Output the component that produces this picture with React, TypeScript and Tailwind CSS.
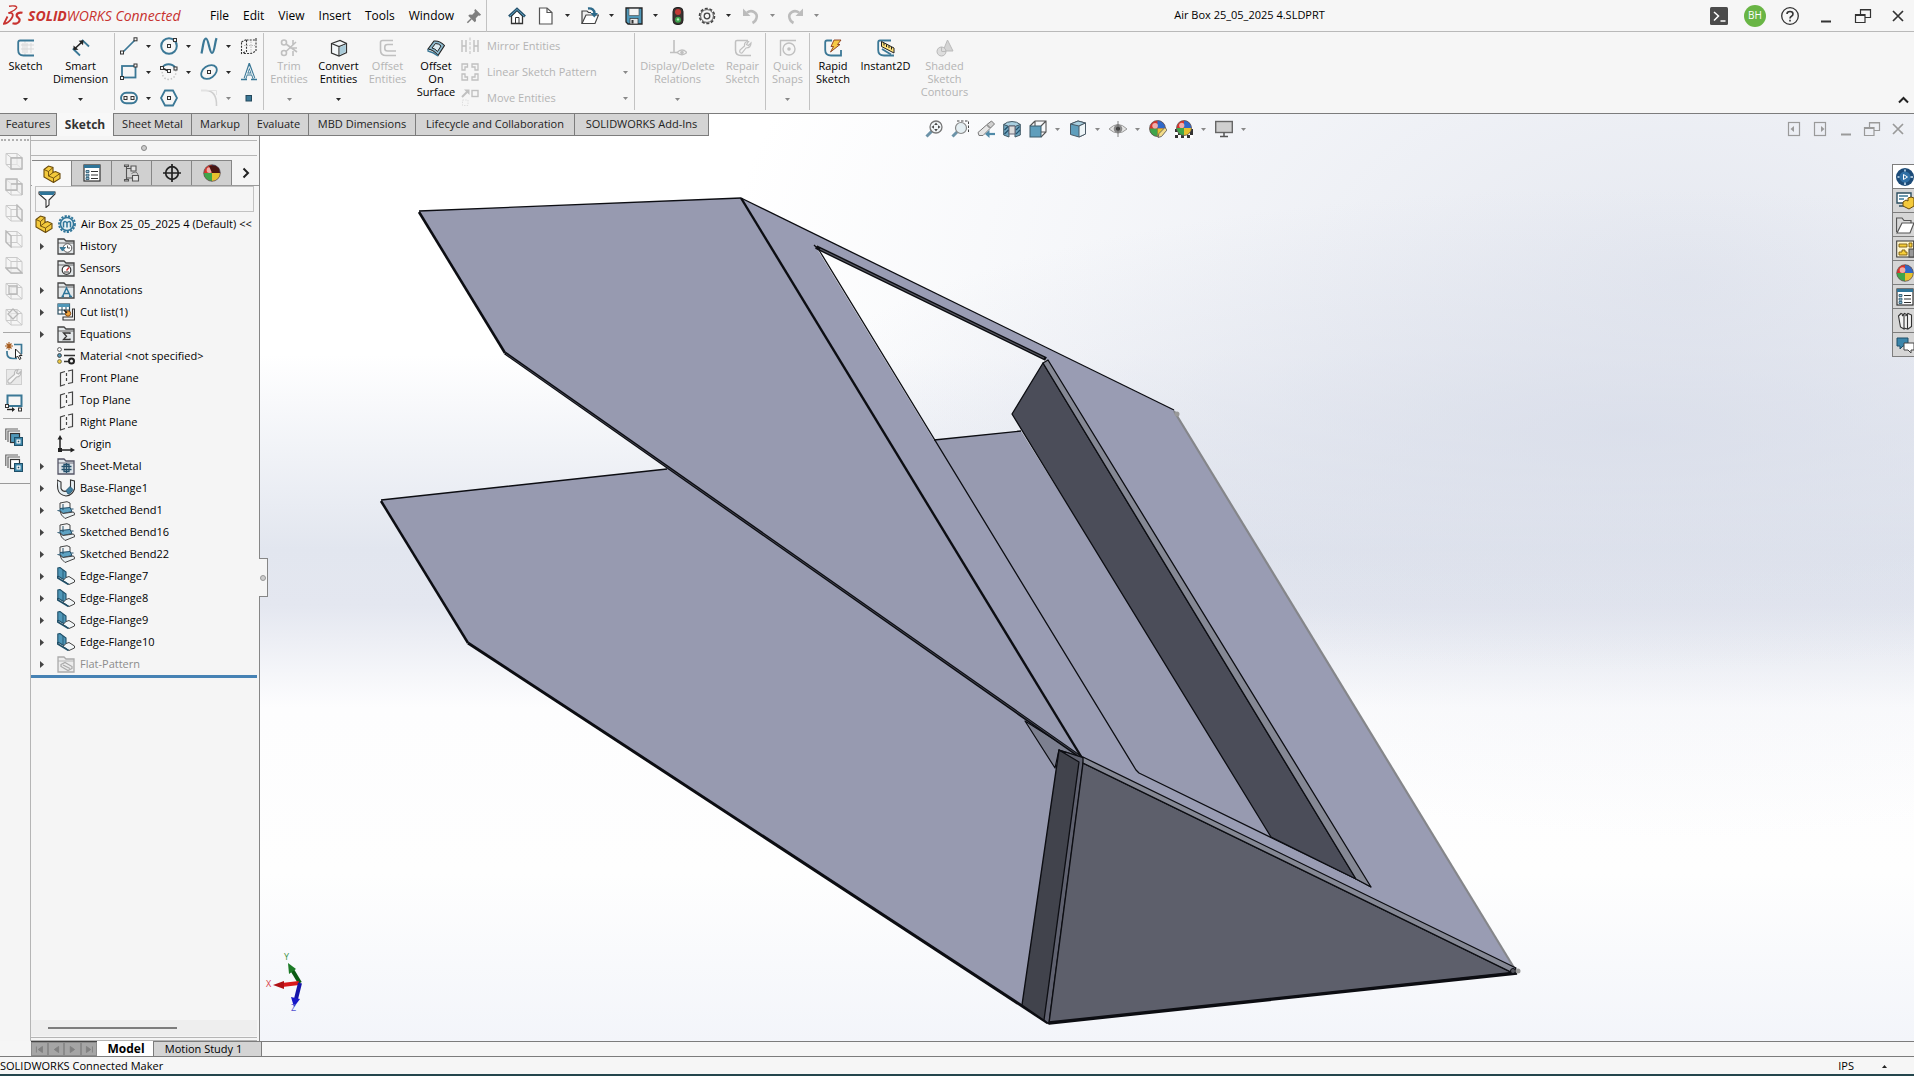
import type { ReactNode } from 'react';

const B = '#3b7896';
const D = '#333333';
const G = '#c0c0c0';

function Ico({ children, size = 18 }: { children: ReactNode; size?: number }) {
  return (
    <svg width={size} height={size} viewBox="0 0 18 18" fill="none" className="shrink-0" aria-hidden="true">
      {children}
    </svg>
  );
}

function Caret({ tone = 'dark' }: { tone?: 'dark' | 'gray' }) {
  return (
    <svg width="5" height="3" viewBox="0 0 5 3" className="shrink-0" aria-hidden="true">
      <path d="M0 0H5L2.5 3Z" fill={tone === 'gray' ? '#888888' : '#2a2a2a'} />
    </svg>
  );
}

const sq = (x: number, y: number, c = D) => (
  <rect x={x} y={y} width="3" height="3" fill="#f6f6f6" stroke={c} strokeWidth="1" />
);

/* ---------- title bar icons ---------- */
const Home = () => (
  <Ico>
    <path d="M3.5 9V16.5H14.5V9L9 3.5Z" fill="#fff" stroke={D} strokeWidth="1.3" />
    <path d="M1 9.5L9 2L17 9.5" stroke="#24506b" strokeWidth="2.6" />
    <path d="M1.6 9.3L9 2.4L16.4 9.3" stroke="#5d9dbb" strokeWidth="1" />
    <path d="M7.5 16.5V10.5H11V16.5" stroke={D} />
  </Ico>
);
const NewDoc = () => (
  <Ico>
    <path d="M2.5 1H10L15 5.5V17H2.5Z" fill="#fff" stroke="#555" strokeWidth="1.2" />
    <path d="M10 1V5.5H15" stroke="#555" strokeWidth="1.2" />
  </Ico>
);
const OpenDoc = () => (
  <Ico>
    <path d="M1 16.5V4H6L7.5 5.5H10" fill="#eee" stroke="#444" strokeWidth="1.2" />
    <path d="M1 16.5L5 8H17.5L14 16.5Z" fill="#fff" stroke="#444" strokeWidth="1.2" />
    <path d="M7 1.5C11 1 13.5 3 13.5 6.5" stroke="#2d6a8a" strokeWidth="2.4" />
    <path d="M9.5 6H17L13.3 10.5Z" fill="#2d6a8a" />
  </Ico>
);
const Save = () => (
  <Ico>
    <path d="M1 1H17V17H3L1 15Z" fill="#4f97b8" stroke="#222" strokeWidth="1.3" />
    <rect x="4" y="1.5" width="10" height="7" fill="#f4f4f4" stroke="#444" strokeWidth=".6" />
    <rect x="5" y="11.5" width="8" height="5.5" fill="#e8e8e8" stroke="#333" strokeWidth=".7" />
    <rect x="6.5" y="13" width="2" height="3.5" fill="#333" />
  </Ico>
);
const Traffic = () => (
  <Ico>
    <rect x="4" y=".5" width="10" height="17" rx="4" fill="#3b3330" stroke="#222" />
    <circle cx="9" cy="5" r="3" fill="#c43a36" />
    <circle cx="9" cy="12.8" r="3" fill="#3da34e" />
    <circle cx="9" cy="12.4" r="1.2" fill="#b8eebc" />
  </Ico>
);
const Gear = () => (
  <Ico>
    <circle cx="9" cy="9" r="7.5" stroke="#444" strokeWidth="1.6" strokeDasharray="3 1.7" />
    <circle cx="9" cy="9" r="6.4" fill="#f6f6f6" stroke="#555" />
    <circle cx="9" cy="9" r="2.8" stroke="#444" strokeWidth="1.3" />
  </Ico>
);
const Undo = () => (
  <Ico>
    <path d="M5 5.5C10 2 16 6 14.5 11C14 13.5 12.5 15 10.5 16" stroke="#bcbcbc" strokeWidth="2.6" />
    <path d="M1 1.5V9H8.5Z" fill="#bcbcbc" />
  </Ico>
);
const Redo = () => (
  <Ico>
    <path d="M13 5.5C8 2 2 6 3.5 11C4 13.5 5.5 15 7.5 16" stroke="#bcbcbc" strokeWidth="2.6" />
    <path d="M17 1.5V9H9.5Z" fill="#bcbcbc" />
  </Ico>
);
const Pin = () => (
  <Ico size={16}>
    <path d="M10.5 1L17 7.5L15.5 8.800L14 8.300L11 11.500L11.300 14.500L9.800 16L2.500 8.700L4 7.200L7 7.500L10 4.500L9.300 2.500Z" fill="#7f7f7f" />
    <path d="M6 12L1.500 16.500" stroke="#7f7f7f" strokeWidth="1.7" />
  </Ico>
);

/* ---------- ribbon icons ---------- */
const SketchI = () => (
  <Ico>
    <path d="M6 4V14M10 4V14M14 4V14M4 6H17M4 10H17M8 2V16" stroke="#d9d9d9" />
    <path d="M17 1.5H3.2Q1.2 1.5 1.2 3.5V11Q1.2 16.5 6.5 16.5H17" stroke={B} strokeWidth="1.8" />
  </Ico>
);
const SmartDim = () => (
  <Ico>
    <path d="M10 .8L17 7.5M.8 9.5L8 16.5" stroke={B} strokeWidth="1.8" />
    <path d="M3 9.5L10 3" stroke="#222" strokeWidth="1.6" />
    <path d="M1.5 11V6.5L6.5 10.8ZM11.5 1.2L6.7 1.8L11 6.2Z" fill="#222" />
  </Ico>
);
const LineI = () => <Ico><path d="M3 15L15 3" stroke={B} strokeWidth="1.7" />{sq(.5, 14)}{sq(14, .8)}</Ico>;
const CircleI = () => <Ico><circle cx="9" cy="9" r="7.8" stroke={B} strokeWidth="2" />{sq(7.5, 7.5)}{sq(13.5, 1.5)}</Ico>;
const SplineI = () => <Ico><path d="M1.5 16.5C3 10 3.5 1.5 6 1.5S9.500 16 12 16S14.500 7 16.500 1.200" stroke={B} strokeWidth="2.200" /></Ico>;
const PlaneI = () => (
  <Ico>
    <path d="M1.500 5L6.500 2.500V14.500L1.500 16.500ZM6.500 3H16V1V14L11 16.500H3" stroke={D} strokeWidth="1.1" strokeDasharray="2 1.2" />
    <path d="M11 4.500V16M4 8.500H15" stroke="#bdbdbd" strokeDasharray="1.500 1" />
  </Ico>
);
const RectI = () => <Ico><rect x="2" y="3" width="13.500" height="11.500" stroke={B} strokeWidth="1.800" />{sq(.5, 13.5)}{sq(14, 1)}</Ico>;
const ArcI = () => (
  <Ico>
    <path d="M2 5C5 0 12 0 15.500 5" stroke={B} strokeWidth="2" />
    <path d="M15.500 7C17 11 14 16 9 16.500C4 16.500 1.500 12 2.500 8" stroke="#c5c5c5" strokeWidth="1.500" strokeDasharray="1.500 1.800" />
    <path d="M2 5L8.500 8" stroke="#222" strokeWidth="1.400" />
    {sq(.5, 3.5)}{sq(14, 4)}{sq(7.5, 6.5)}
  </Ico>
);
const EllipseI = () => <Ico><ellipse cx="9" cy="9" rx="8.500" ry="6" transform="rotate(-35 9 9)" stroke={B} strokeWidth="1.800" />{sq(7.5, 7.5)}</Ico>;
const TextI = () => (
  <Ico>
    <path d="M5 15.500L9.300 2.500L14 15.500M6.500 11H12" stroke={B} strokeWidth="2.800" />
    <path d="M5 15.500L9.300 3.500L14 15.500M6.500 11H12" stroke="#eef4f7" strokeWidth="1" />
    <path d="M1 16.500H7M11 16.500H17" stroke={B} strokeWidth="1.500" />
  </Ico>
);
const SlotI = () => <Ico><rect x="1" y="3.800" width="16" height="10.500" rx="5.200" stroke={B} strokeWidth="1.900" />{sq(4, 7.5)}{sq(11, 7.5)}</Ico>;
const PolyI = () => <Ico><path d="M5 1.500H13L17 9L13 16.500H5L1 9Z" stroke={B} strokeWidth="1.800" />{sq(7.5, 7.5)}</Ico>;
const FilletI = () => <Ico><path d="M1 1.500H6Q17 2 16.500 17" stroke="#cfcfcf" strokeWidth="1.600" /><path d="M1 1.500H16.500V6" stroke="#e2e2e2" /></Ico>;
const PointI = () => <Ico><rect x="6" y="6.500" width="5.500" height="5.500" fill={B} stroke="#24485c" /></Ico>;

const TrimI = () => (
  <Ico>
    <g stroke={G} strokeWidth="1.600">
      <circle cx="4" cy="3.500" r="2.500" /><circle cx="4" cy="14" r="2.500" />
      <path d="M6 5L17 13M6 12.500L16 3M10 9H17M13 1V6M13 12V17" />
    </g>
  </Ico>
);
const ConvertI = () => (
  <Ico>
    <path d="M1.500 4.500L10 1.500L16.500 4.500V13.500L9 17L1.500 14Z" fill="#f3f7f9" stroke="#333" strokeWidth="1.200" />
    <path d="M1.500 4.500L9 7.500L16.500 4.500M9 7.500V17" stroke="#333" strokeWidth="1.200" />
    <path d="M9.800 8.200L15.800 5.500V13L9.800 16Z" fill="#a9cbd9" />
  </Ico>
);
const OffsetI = () => (
  <Ico>
    <path d="M14 1.500H3.500Q1.500 1.500 1.500 3.500V11Q1.500 16.500 7 16.500H17" stroke={G} strokeWidth="1.600" />
    <path d="M14 5.500H8.500Q5.800 5.500 5.800 8V9.500Q5.800 12 8.500 12H17" stroke={G} strokeWidth="1.600" />
  </Ico>
);
const OffSurfI = () => (
  <Ico>
    <path d="M1 10L7 2Q13 1.500 17.500 6.500L11 16.500Q7 11 1 10Z" fill="#8db9cd" stroke="#222" strokeWidth="1.100" />
    <path d="M5 9L8.500 4.500Q12 4.500 14 7L10.500 12.500Q8 9.500 5 9Z" fill="#dceaf0" stroke="#222" />
    <path d="M1 10V12Q6 13 11 17" stroke={B} strokeWidth="1.300" />
  </Ico>
);
const MirrorI = () => <Ico><path d="M9 .5V17.500" stroke={G} strokeDasharray="3 1.500" /><path d="M1 3V15M1 9H5M5 3V15M13 3V15M13 9H17M17 3V15" stroke={G} strokeWidth="1.400" /></Ico>;
const PatternI = () => (
  <Ico>
    <g stroke={G} strokeWidth="1.300">
      <path d="M1 1H6.500V4H4V7H1ZM11 1H17V7H14V4H11ZM1 11H4V14H6.500V17H1ZM14 11H17V17H11V14H14Z" />
    </g>
  </Ico>
);
const MoveI = () => <Ico><path d="M1 8L7 2" stroke={G} strokeWidth="2" /><path d="M3 .5H8.500V6Z" fill={G} /><rect x="11" y="1.500" width="6" height="6" stroke={G} strokeWidth="1.400" /><path d="M1.500 11H7V16.500H1.500Z" stroke="#dedede" strokeDasharray="1.500 1.200" /></Ico>;
const RelI = () => <Ico><path d="M1 13.500H8M5 1V13" stroke={G} strokeWidth="1.600" /><path d="M8 13.500Q13 8.500 18 13.500Q13 18 8 13.500Z" stroke={G} strokeWidth="1.200" /><circle cx="13" cy="13.500" r="1.800" fill={G} /></Ico>;
const RepairI = () => <Ico><path d="M14 1.500H3Q1.500 1.500 1.500 3V11Q1.500 16.500 7 16.500H17" stroke={G} strokeWidth="1.500" /><path d="M17 4L14.500 6.500L12.500 5.500L14.500 2.500Q10 2.500 10.500 7L6 11Q5 14.500 8 14L12 9Q17 9 17 4Z" stroke={G} strokeWidth="1.200" /></Ico>;
const SnapI = () => <Ico><path d="M1 1.500H17M1.500 1V17" stroke={G} strokeWidth="1.400" /><circle cx="10" cy="10" r="6" stroke={G} strokeWidth="1.400" /><circle cx="10" cy="10" r="1.800" fill={G} /></Ico>;
const RapidI = () => (
  <Ico>
    <path d="M8 1.500H3Q1.200 1.500 1.200 3.500V11Q1.200 16.500 7 16.500H17V11" stroke={B} strokeWidth="1.800" />
    <path d="M10 1H17L13.500 5.500H16L6.500 13L9.500 7.500H7Z" fill="#f6c945" stroke="#8a3a1a" strokeWidth=".9" />
  </Ico>
);
const InstantI = () => (
  <Ico>
    <path d="M14 1.500H3Q1.200 1.500 1.200 3.500V11Q1.200 16.500 7 16.500H17" stroke={B} strokeWidth="1.800" />
    <path d="M4.500 2.500L17 9V14L4.500 7.500Z" fill="#ffe27a" stroke="#222" />
    <path d="M7 4V6.500M9.500 5.300V8M12 6.500V9M14.500 8V10.500" stroke="#222" />
    <path d="M5 10L14 15.500" stroke={B} strokeWidth="1.800" />
  </Ico>
);
const ShadedI = () => <Ico><path d="M11.500 1L17 12H7Z" fill="#d4d4d4" stroke="#bbb" /><circle cx="5.500" cy="12.500" r="4.500" fill="#ddd" stroke="#b8b8b8" /><path d="M5.500 12V8M5.500 12.500H10" stroke="#bbb" /></Ico>;

/* ---------- view toolbar icons ---------- */
const ZoomFit = () => (
  <Ico>
    <path d="M1.500 16.500L7 11" stroke="#6c93a8" strokeWidth="3" />
    <circle cx="11" cy="7" r="6" fill="#f2f6f8" stroke="#777" strokeWidth="1.300" />
    <path d="M11 2.500L12.800 5H9.200ZM11 11.500L12.800 9H9.200ZM6.500 7L9 5.200V8.800ZM15.500 7L13 5.200V8.800Z" fill="#4a4a4a" />
  </Ico>
);
const ZoomArea = () => (
  <Ico>
    <path d="M6 1H17.500V12" stroke="#444" strokeDasharray="2.500 1.500" />
    <path d="M1.500 16.500L7 11" stroke="#6c93a8" strokeWidth="3" />
    <circle cx="10" cy="8" r="5.500" fill="#e4eef2" stroke="#888" strokeWidth="1.200" />
  </Ico>
);
const PrevView = () => (
  <Ico>
    <path d="M1 12.500L9.500 5L13 8.500L6 15.500L2 15.500Z" fill="#e6e6e6" stroke="#777" />
    <path d="M10 4.500L14.500 1L17.500 4L13.500 8Z" fill="#d0d0d0" stroke="#777" />
    <path d="M18 14H11" stroke="#4f8aa8" strokeWidth="2.200" /><path d="M12.500 10V18L8 14Z" fill="#4f8aa8" />
  </Ico>
);
const Section = () => (
  <Ico>
    <path d="M.7 4.500Q4 1.500 9 1.500T17.300 4.500L12 7.500V6H6V7.500Z" fill="#a9cfe0" stroke="#455a66" />
    <path d="M.7 4.500L6 6.500V17L.7 15ZM12 6.500L17.300 4.500V15L12 17Z" fill="#6fa6c0" stroke="#455a66" />
    <path d="M6 6H12V14H6Z" fill="#dcdcdc" stroke="#667" />
    <path d="M1.500 10L5 6.500M1.500 14L5.500 10M13 10L16.500 6.500M13 14L17 10" stroke="#24506b" strokeWidth="1.200" />
  </Ico>
);
const Orient = () => <Ico><path d="M6 1H17V12L12 17M6 1L1 6M17 1L12 6M6 1V6M12 12H17" stroke="#555" strokeWidth="1.100" /><rect x="1" y="6" width="11" height="11" fill="#5f9ebc" stroke="#3b5a6a" /></Ico>;
const Display = () => <Ico><path d="M1.500 4L9 1L16.500 3V14L10 17L1.500 14.500Z" fill="#5f9ebc" stroke="#4a5a66" /><path d="M1.500 4L9 1L16.500 3L10 6Z" fill="#a9cfe0" stroke="#4a5a66" /><path d="M10 6L16.500 3V14L10 17Z" fill="#eef5f8" stroke="#4a5a66" /></Ico>;
const Eye = () => <Ico><path d="M0 9Q9 0 18 9Q9 17 0 9Z" fill="#e4e4e4" stroke="#999" /><circle cx="9" cy="8.800" r="4.300" fill="#8a8a8a" /><circle cx="9" cy="8.800" r="2" fill="#333" /><path d="M9 1V17" stroke="#666" strokeWidth=".8" /></Ico>;
const ball = (cx: number, cy: number, r: number) => (
  <g>
    <circle cx={cx} cy={cy} r={r} fill="#d9342b" />
    <path d={`M${cx} ${cy}V${cy - r}A${r} ${r} 0 0 1 ${cx + r} ${cy}Z`} fill="#2f68c8" />
    <path d={`M${cx} ${cy}H${cx + r}A${r} ${r} 0 0 1 ${cx} ${cy + r}Z`} fill="#e6c02e" />
    <path d={`M${cx} ${cy}V${cy + r}A${r} ${r} 0 0 1 ${cx - r} ${cy}Z`} fill="#3fa54a" />
    <circle cx={cx - r * 0.3} cy={cy - r * 0.35} r={r * 0.35} fill="#fff" opacity=".6" />
    <circle cx={cx} cy={cy} r={r} stroke="#555" strokeWidth=".7" />
  </g>
);
const EditApp = () => <Ico>{ball(8.5, 8.5, 8)}<path d="M9 17.500L10 13.500L16 7.500L18 10L12.500 16.500Z" fill="#f3dc8a" stroke="#555" strokeWidth=".8" /></Ico>;
const Scene = () => <Ico><path d="M0 9H18V18H0Z" fill="#fff" /><path d="M0 9H3V12H0ZM15 9H18V12H15ZM3 12H6V15H3ZM0 15H3V18H0ZM6 15H9V18H6ZM12 15H15V18H12ZM15 12H18V15H15Z" fill="#333" />{ball(9, 8, 7.500)}</Ico>;
const Monitor = () => <Ico><rect x=".7" y="1.500" width="16.600" height="11" fill="#cfcfcf" stroke="#666" strokeWidth="1.400" /><path d="M9 12.500V16M5 16.500H13" stroke="#555" strokeWidth="1.500" /></Ico>;

const winC = '#9a9a9a';
const Min = ({ c = '#333' }) => <Ico><path d="M4 14.500H14" stroke={c} strokeWidth="2" /></Ico>;
const Restore = ({ c = '#333' }) => <Ico><path d="M1.500 7.500H11V15.500H1.500ZM1.500 8.500H11M6.500 7V2.500H16.500V10.500H11.500M6.500 3H16.500" stroke={c} strokeWidth="1.200" /></Ico>;
const Close = ({ c = '#333' }) => <Ico><path d="M4 4L14 14M14 4L4 14" stroke={c} strokeWidth="1.700" /></Ico>;
const PaneL = () => <Ico><rect x="3.500" y="2.500" width="11" height="13" stroke={winC} strokeWidth="1.200" /><path d="M9 6V12L5.500 9Z" fill={winC} /></Ico>;
const PaneR = () => <Ico><rect x="3.500" y="2.500" width="11" height="13" stroke={winC} strokeWidth="1.200" /><path d="M10 6V12L13.500 9Z" fill={winC} /></Ico>;

/* ---------- left strip icons ---------- */
const cubeFaces = [
  'M6 6H17V17H6Z',
  'M1 1H12V12H1ZM6 6H17V17',
  'M12 1L17 6V17L12 12Z',
  'M1 1L6 6V17L1 12Z',
  'M1 12H12L17 17H6Z',
  'M4 4H12V12H4Z',
  'M8 1L13 6L8 11L3 6Z',
];
const Cube = ({ n }: { n: number }) => (
  <Ico>
    <path d="M1 1.500H12L17 5.500V17H6L1 12.500ZM1 1.500L6 5.500H17M6 5.500V17M12 1.500V12.500H1M12 12.500L17 17" stroke="#cacaca" />
    <path d={cubeFaces[n]} fill="#eeeeee" fillOpacity=".6" stroke="#b8b8b8" strokeWidth="1.300" />
  </Ico>
);
const EditSketch = () => (
  <Ico>
    <path d="M9 2.500H16.500V12M2 9V11Q2 16.500 8 16.500H12" stroke={B} strokeWidth="1.700" />
    <path d="M4 0V8M0 4H8M1.500 1.500L6.500 6.500M6.500 1.500L1.500 6.500" stroke="#a55a1c" strokeWidth="1.100" />
    <path d="M10.500 7V16L12.500 14L14.500 17.500L16 16.500L14.200 13.500H17Z" fill="#fff" stroke="#222" />
  </Ico>
);
const Wrench = () => <Ico><rect x="1.500" y="1.500" width="15" height="15" fill="#e9e9e9" stroke="#cfcfcf" /><path d="M16 3.500L13.500 6L11.500 5L13 1.500Q9 2 9.500 6.500L3 12Q2 16 6 15L11.500 9Q16 9 16 3.500Z" fill="#f6f6f6" stroke="#bbb" strokeWidth="1.200" /></Ico>;
const RectMove = () => <Ico><rect x="2.500" y="1.500" width="14" height="10.500" stroke={B} strokeWidth="2" /><path d="M2 15.500H9" stroke="#222" strokeWidth="1.400" /><path d="M7 13V18L10 15.500Z" fill="#222" />{sq(.5, 10.500)}{sq(13.500, 14)}</Ico>;
const Blocks = ({ light = false }) => (
  <Ico>
    <path d="M.8 12V1H13M3 14V3H15" stroke="#666" strokeWidth="1.200" />
    <rect x="5.500" y="5.500" width="9" height="9" fill={light ? '#fff' : '#4f97b8'} stroke="#333" strokeWidth="1.200" />
    <rect x="9.500" y="9.500" width="8" height="8" fill="#3e86a8" stroke="#1f4f68" />
    <rect x="11.500" y="11.500" width="4" height="4" fill="#fff" />
    <rect x="12.700" y="12.700" width="1.600" height="1.600" fill="#1f4f68" />
  </Ico>
);

/* ---------- tree icons ---------- */
const folder = (c = '#444', f = '#e4e8ea') => (
  <>
    <path d="M1 17V2H7L9 4H17V17Z" fill={f} stroke={c} strokeWidth="1.300" />
    <path d="M1 6H17" stroke={c} strokeWidth=".8" />
  </>
);
const PartY = () => (
  <Ico>
    <path d="M1 4.500L5.500 1L10 2.500V7.500L12.500 6.500L17 8.500V13.500L10.500 17.500L1 12Z" fill="#f3c93c" stroke="#6a4b0c" strokeWidth="1.100" />
    <path d="M1 4.500L5.500 6.500V11L10.500 13V17.500M5.500 6.500L10 2.500M10.500 13L17 8.500M5.500 11L10 7.500" stroke="#6a4b0c" strokeWidth=".9" />
  </Ico>
);
const Maker = () => (
  <Ico>
    <circle cx="9" cy="9" r="8" stroke="#2f7599" strokeWidth="1.800" strokeDasharray="2.200 1.300" />
    <circle cx="9" cy="9" r="6.500" fill="#e9f2f6" stroke="#2f7599" strokeWidth="1.500" />
    <path d="M5.500 12.500V7.500Q7.500 5.500 9 8V12.500M9 8Q11 5.500 12.500 7.500V12.500" stroke="#2f7599" strokeWidth="1.500" />
  </Ico>
);
const History = () => <Ico>{folder()}<circle cx="10.500" cy="11" r="4.300" fill="#fff" stroke="#555" /><path d="M10.500 8.500V11H13" stroke="#555" /><path d="M3 10.500L5.500 14L8.500 10.500Z" fill={B} stroke={B} /></Ico>;
const Sensors = () => <Ico>{folder()}<circle cx="9.500" cy="11" r="4.300" fill="#fff" stroke="#333" strokeWidth="1.200" /><path d="M9.500 11.500L12 8.500" stroke="#c33" strokeWidth="1.400" /><path d="M7 13H12" stroke="#333" /></Ico>;
const Annot = () => <Ico>{folder()}<path d="M5.500 15.500L9.500 7L13.500 15.500M7 12.500H12M4.500 15.500H7M12 15.500H15" stroke="#2f7599" strokeWidth="1.500" /></Ico>;
const CutList = () => (
  <Ico>
    <rect x="1" y="1" width="11.500" height="10" fill="#fff" stroke="#2d4f60" strokeWidth="1.200" />
    <rect x="1" y="1" width="11.500" height="3" fill="#4f97b8" />
    <path d="M1 7H12.500M5 4V11M9 4V11" stroke="#2d4f60" />
    <path d="M6 14L15.500 14V6H17.500V17H6Z" fill="#f4f4f4" stroke="#333" strokeWidth="1.100" />
    <circle cx="11" cy="10.500" r="2.700" fill="#f0a53c" stroke="#8a4a12" />
    <path d="M7 7L10 10" stroke="#222" strokeWidth="1.500" />
  </Ico>
);
const Equations = () => <Ico>{folder()}<path d="M13 9V8H6.500L9.500 11.300L6.500 14.500H13V13.500" stroke="#333" strokeWidth="1.300" /></Ico>;
const Material = () => (
  <Ico>
    <circle cx="2.500" cy="2.500" r="1.900" fill="#fff" stroke="#555" /><circle cx="2.500" cy="8.500" r="1.900" fill="#4f97b8" stroke="#444" /><circle cx="2.500" cy="14.500" r="1.900" fill="#f3c93c" stroke="#775" />
    <path d="M7 2.500H18M7 8.500H18M7 14.500H12" stroke="#333" strokeWidth="1.700" />
    <circle cx="14.500" cy="14" r="2.500" stroke="#222" strokeWidth="2" />
  </Ico>
);
const Plane = () => <Ico><path d="M8 2.500L3.500 4V17L8 15.500M11 2L15.500 1V13.500L11 14.500M9.500 4V7M9.500 9V12" stroke="#444" strokeWidth="1.200" /></Ico>;
const Origin = () => <Ico><path d="M3 3V15H16" stroke="#222" strokeWidth="1.500" /><path d="M3 0L5.500 4.500H.5ZM18 15L13.500 12.500V17.500Z" fill="#222" /><rect x="1" y="13" width="4" height="4" fill="#222" /></Ico>;
const SheetM = () => <Ico>{folder('#556', '#dfe5ea')}<path d="M7 7.500H12V14.500H7ZM4.500 9.500H14.500M4.500 12.500H14.500M9.500 6V16" stroke="#24506b" strokeWidth="1.300" /></Ico>;
const BaseF = () => (
  <Ico>
    <path d="M0 1L4 3V9.500Q6 13.500 10 12L13.500 9V1L17.500 2V10Q15.500 16.500 9 17Q2 16 .8 10Z" fill="#e6eef2" stroke="#333" strokeWidth="1.100" />
    <path d="M9 11.500L13 7.500L16 10.500Q14 14.500 11 15Z" fill="#3f7fa0" stroke="#24506b" strokeWidth=".8" />
  </Ico>
);
const Bend = () => (
  <Ico>
    <path d="M3 2L10 .7L13 2V7L6 9L3 7.500Z" fill="#f4f4f4" stroke="#444" />
    <path d="M3 7.500L13 6.500L15 10.500L6 12.500L3 10Z" fill="#5ea2c2" stroke="#24506b" />
    <path d="M3 10L6 12.500L16.500 11L18 13.500L8 17.500L4.500 14Z" fill="#eaf1f4" stroke="#444" />
    <path d="M.5 9.500L3 10M14 8H16.500M6 3V9" stroke="#24506b" />
  </Ico>
);
const Edge = () => (
  <Ico>
    <path d="M.8 1L3 .5L9 5V14L.8 9Z" fill="#4f97b8" stroke="#1f4f68" strokeWidth="1.100" />
    <path d="M9 10.500L12 9.500L17.500 13V15L12 17.500L6 13.500Z" fill="#f2f6f8" stroke="#444" />
    <path d="M.8 9V11L11.500 17.500" stroke="#1f4f68" strokeWidth="1.600" />
    <path d="M6 3V12" stroke="#1f4f68" strokeWidth=".8" />
  </Ico>
);
const Flat = () => <Ico>{folder('#aaaaaa', '#ececec')}<path d="M4 9.500L8 7.500L15 11.500V13.500L11 15.500L4 11.500ZM6 10L13 13.500" stroke="#aaa" strokeWidth="1.200" /></Ico>;
const Props = () => (
  <Ico>
    <rect x="1" y="1" width="16" height="16" fill="#fff" stroke="#333" strokeWidth="1.200" />
    <rect x="1" y="1" width="16" height="3" fill="#2f7599" />
    <path d="M3 6.500H6V8.500H3ZM3 10.200H6V12.200H3ZM3 13.500H6V15.500H3Z" fill="#8fc1d6" stroke="#24506b" strokeWidth=".8" />
    <path d="M8 7.500H15M8 11H15M8 14.500H15" stroke="#333" strokeWidth="1.200" />
  </Ico>
);
const Config = () => (
  <Ico>
    <path d="M3.500 2V16M3.500 4.500H8M3.500 14H9M1.500 1H5.500V2.500H1.500ZM1.500 15.500H5.500V17H1.500Z" stroke="#555" strokeWidth="1.100" />
    <path d="M8 2H13V7H8ZM9.500 11.500H15.500V17H9.500Z" fill="#e4e4e4" stroke="#555" strokeWidth="1.100" />
    <path d="M8.500 9.500Q14 6 15 11" stroke="#777" />
  </Ico>
);
const Target = () => <Ico><circle cx="9" cy="9" r="6.300" stroke="#222" strokeWidth="1.700" /><path d="M9 0V18M0 9H18" stroke="#222" strokeWidth="1.700" /></Ico>;
const BallI = () => <Ico>{ball(9, 9, 8.3)}</Ico>;
const BallDark = () => <Ico>{ball(9, 9, 8.3)}<path d="M9 9L6 2Q12 -.5 16 4.500L17 9Z" fill="#4a1512" /></Ico>;
const Funnel = () => <Ico><path d="M1 2H17V4L11 10V15L8 17.500V10L1 4Z" fill="#fff" stroke="#333" strokeWidth="1.100" /><path d="M1 1.500H17L15.500 5H2.500Z" fill="#2f7599" /></Ico>;

/* ---------- task pane icons ---------- */
const Globe = () => <Ico><circle cx="9" cy="9" r="9" fill="#1c4b78" /><circle cx="9" cy="9" r="5.500" fill="#2f6fa5" /><path d="M7.500 6.500L11.500 9L7.500 11.500Z" stroke="#fff" /><path d="M9 1.500V3.500M9 14.500V17M1.500 9H3.500M14.500 9H17" stroke="#cfe6f5" strokeWidth="1.500" /></Ico>;
const Res = () => <Ico><path d="M1 1H15V11H1ZM3 14H8" fill="#fff" stroke="#2d4f60" strokeWidth="1.400" /><path d="M3 4H12M3 7H8" stroke={B} strokeWidth="1.300" /><path d="M7 10L10 8L12 9V6L15 5L18 6V14L13 17L7 14Z" fill="#f3c93c" stroke="#6a4b0c" /></Ico>;
const FolderI = () => <Ico><path d="M.5 16V2H6L8 4.500H15V7" fill="#d8d8d8" stroke="#555" strokeWidth="1.200" /><path d="M1 17L6 7H18L14 17Z" fill="#fff" stroke="#555" strokeWidth="1.200" /></Ico>;
const Palette = () => <Ico><rect x=".7" y="1" width="17" height="16" fill="#fff6cf" stroke="#333" /><path d="M3 4H11V7H3ZM6 10H9V12H11V15H3V12H6ZM13 3H16V7H13Z" fill="#f6cf3a" stroke="#7a5a10" strokeWidth=".9" /><rect x="13" y="9" width="5" height="8" fill="#999" stroke="#444" /></Ico>;
const Books = () => <Ico><path d="M2.500 4L5 1.500L8 3V17L4.500 15ZM6 4L8.500 1.500L11.500 3V17L8 16M9.500 4L12 1.500L15.500 3V14.500L12 17" fill="#f2f2f2" stroke="#333" strokeWidth="1.100" /></Ico>;
const Forum = () => <Ico><path d="M1 2H12V10H7L4 13V10H1Z" fill="#3c86ab" stroke="#1f4f68" /><path d="M8 7H18V14H15V17L12 14H8Z" fill="#fff" stroke="#444" /></Ico>;

type RibbonProps = { icon: ReactNode; lines: string[]; w: string; off?: boolean; caret?: boolean };
function RibbonButton({ icon, lines, w, off, caret }: RibbonProps) {
  return (
    <button className={`flex h-full shrink-0 flex-col items-center pt-[7px] ${w} ${off ? 'text-[#b4b4b4]' : 'text-black'}`}>
      {icon}
      <span className="mt-0.5 text-center leading-[13px]">
        {lines.map((l) => (
          <span key={l} className="block whitespace-nowrap">{l}</span>
        ))}
      </span>
      {caret && (
        <span className="mt-auto mb-3">
          <Caret tone={off ? 'gray' : 'dark'} />
        </span>
      )}
    </button>
  );
}

function RibbonSep() {
  return <div className="mt-px mb-[3px] w-px shrink-0 bg-[#c2c2c2]" />;
}

function MiniTool({ icon, label, caret, off }: { icon: ReactNode; label: string; caret?: boolean; off?: boolean }) {
  return (
    <button aria-label={label} className="flex h-[26px] items-center gap-2">
      {icon}
      {caret && <Caret tone={off ? 'gray' : 'dark'} />}
    </button>
  );
}

const tabs: [string, string][] = [
  ['Features', 'w-[57px]'],
  ['Sketch', 'w-[57px]'],
  ['Sheet Metal', 'w-[78px]'],
  ['Markup', 'w-[57px]'],
  ['Evaluate', 'w-[60px]'],
  ['MBD Dimensions', 'w-[107px]'],
  ['Lifecycle and Collaboration', 'w-[159px]'],
  ['SOLIDWORKS Add-Ins', 'w-[134px]'],
];

const tree: { label: string; icon: ReactNode; open?: boolean; dim?: boolean }[] = [
  { label: 'History', icon: <History />, open: true },
  { label: 'Sensors', icon: <Sensors /> },
  { label: 'Annotations', icon: <Annot />, open: true },
  { label: 'Cut list(1)', icon: <CutList />, open: true },
  { label: 'Equations', icon: <Equations />, open: true },
  { label: 'Material <not specified>', icon: <Material /> },
  { label: 'Front Plane', icon: <Plane /> },
  { label: 'Top Plane', icon: <Plane /> },
  { label: 'Right Plane', icon: <Plane /> },
  { label: 'Origin', icon: <Origin /> },
  { label: 'Sheet-Metal', icon: <SheetM />, open: true },
  { label: 'Base-Flange1', icon: <BaseF />, open: true },
  { label: 'Sketched Bend1', icon: <Bend />, open: true },
  { label: 'Sketched Bend16', icon: <Bend />, open: true },
  { label: 'Sketched Bend22', icon: <Bend />, open: true },
  { label: 'Edge-Flange7', icon: <Edge />, open: true },
  { label: 'Edge-Flange8', icon: <Edge />, open: true },
  { label: 'Edge-Flange9', icon: <Edge />, open: true },
  { label: 'Edge-Flange10', icon: <Edge />, open: true },
  { label: 'Flat-Pattern', icon: <Flat />, open: true, dim: true },
];

function TitleBar() {
  return (
    <header className="flex h-8 shrink-0 items-center border-b border-[#b9b9b9] bg-[#f6f6f6]">
      <div className="flex w-[210px] items-center">
        <svg width="21" height="22" viewBox="0 0 21 22" fill="none" className="ml-[3px] shrink-0" aria-hidden="true">
          <path d="M6 1.200C10 .5 14.500 .8 13.500 3C12.500 5 9 6.500 5.500 8.200" stroke="#c8322f" strokeWidth="1.400" />
          <path d="M5.500 8.200C10.500 7 10.500 10.500 8.500 13.500C6.500 16.500 3.500 18.500 .8 18.800L4.500 11.500" stroke="#c8322f" strokeWidth="1.800" />
          <path d="M19.500 7.800C16 7 13 8.500 13.800 11C14.500 12.800 17.500 13 16.500 15.800C15.500 18.500 12 19 9.500 18.300" stroke="#c8322f" strokeWidth="2.200" />
        </svg>
        <span className="ml-1 text-[14px] whitespace-nowrap text-[#c8322f] italic">
          <b>SOLID</b>WORKS Connected
        </span>
      </div>
      <nav className="flex items-center gap-[14px] text-[12px]">
        {['File', 'Edit', 'View', 'Insert', 'Tools', 'Window'].map((m) => (
          <button key={m}>{m}</button>
        ))}
      </nav>
      <button aria-label="Pin menu" className="ml-3"><Pin /></button>
      <div className="ml-1 h-8 w-px bg-[#c2c2c2]" />
      <div className="ml-[21px] flex items-center gap-[11px]">
        <button aria-label="Home"><Home /></button>
        <button aria-label="New" className="flex items-center gap-2.5"><NewDoc /><Caret /></button>
        <button aria-label="Open" className="flex items-center gap-2.5"><OpenDoc /><Caret /></button>
        <button aria-label="Save" className="flex items-center gap-2.5"><Save /><Caret /></button>
        <button aria-label="Rebuild"><Traffic /></button>
        <button aria-label="Options" className="flex items-center gap-2.5"><Gear /><Caret /></button>
        <button aria-label="Undo" className="flex items-center gap-2.5"><Undo /><Caret tone="gray" /></button>
        <button aria-label="Redo" className="flex items-center gap-2.5"><Redo /><Caret tone="gray" /></button>
      </div>
      <h1 className="flex-1 pr-[30px] text-center text-[11px]">Air Box 25_05_2025 4.SLDPRT</h1>
      <div className="flex items-center pr-[7px]">
        <button aria-label="Command prompt">
          <Ico><rect width="18" height="18" rx="1.500" fill="#4b4b4b" /><path d="M4 5L8.500 9L4 13.500M10.500 14H15.500" stroke="#fff" strokeWidth="1.500" /></Ico>
        </button>
        <button className="ml-4 flex size-[22px] items-center justify-center rounded-full bg-[#69b545] text-[10px] text-white">BH</button>
        <button aria-label="Help" className="ml-[15px]">
          <Ico><circle cx="9" cy="9" r="8.300" stroke="#333" strokeWidth="1.300" /><path d="M6 7Q6 4.500 9 4.500T12 7Q12 8.500 10.500 9.200T9 11.500M9 12.800V14.500" stroke="#333" strokeWidth="1.600" /></Ico>
        </button>
        <button aria-label="Minimize" className="ml-[18px]"><Min /></button>
        <button aria-label="Restore" className="ml-[19px]"><Restore /></button>
        <button aria-label="Close" className="ml-[17px]"><Close /></button>
      </div>
    </header>
  );
}

function Ribbon() {
  return (
    <div className="flex h-[82px] shrink-0 border-b border-[#7c7c7c] bg-[#f6f6f6] text-[11px]">
      <RibbonButton icon={<SketchI />} lines={['Sketch']} w="w-[51px]" caret />
      <RibbonButton icon={<SmartDim />} lines={['Smart', 'Dimension']} w="w-[59px]" caret />
      <div className="w-1" />
      <RibbonSep />
      <div className="grid grid-cols-[40px_40px_40px_auto] content-start px-[5px] pt-px">
        <MiniTool icon={<LineI />} label="Line" caret />
        <MiniTool icon={<CircleI />} label="Circle" caret />
        <MiniTool icon={<SplineI />} label="Spline" caret />
        <MiniTool icon={<PlaneI />} label="Plane" />
        <MiniTool icon={<RectI />} label="Rectangle" caret />
        <MiniTool icon={<ArcI />} label="Arc" caret />
        <MiniTool icon={<EllipseI />} label="Ellipse" caret />
        <MiniTool icon={<TextI />} label="Text" />
        <MiniTool icon={<SlotI />} label="Slot" caret />
        <MiniTool icon={<PolyI />} label="Polygon" />
        <MiniTool icon={<FilletI />} label="Fillet" caret off />
        <MiniTool icon={<PointI />} label="Point" />
      </div>
      <RibbonSep />
      <RibbonButton icon={<TrimI />} lines={['Trim', 'Entities']} w="w-[50px]" off caret />
      <RibbonButton icon={<ConvertI />} lines={['Convert', 'Entities']} w="w-[49px]" caret />
      <RibbonButton icon={<OffsetI />} lines={['Offset', 'Entities']} w="w-[49px]" off />
      <RibbonButton icon={<OffSurfI />} lines={['Offset', 'On', 'Surface']} w="w-[48px]" />
      <div className="flex w-[174px] shrink-0 flex-col pt-px pl-px text-[#b4b4b4]">
        {([['Mirror Entities', <MirrorI key="m" />, false], ['Linear Sketch Pattern', <PatternI key="p" />, true], ['Move Entities', <MoveI key="v" />, true]] as [string, ReactNode, boolean][]).map(([t, i, c]) => (
          <button key={t} className="flex h-[26px] w-full items-center gap-2 pr-1.5">
            {i}
            <span className="flex-1 text-left">{t}</span>
            {c && <Caret tone="gray" />}
          </button>
        ))}
      </div>
      <RibbonSep />
      <RibbonButton icon={<RelI />} lines={['Display/Delete', 'Relations']} w="w-[85px]" off caret />
      <RibbonButton icon={<RepairI />} lines={['Repair', 'Sketch']} w="w-[45px]" off />
      <RibbonSep />
      <RibbonButton icon={<SnapI />} lines={['Quick', 'Snaps']} w="w-[43px]" off caret />
      <RibbonSep />
      <RibbonButton icon={<RapidI />} lines={['Rapid', 'Sketch']} w="w-[46px]" />
      <RibbonButton icon={<InstantI />} lines={['Instant2D']} w="w-[59px]" />
      <RibbonButton icon={<ShadedI />} lines={['Shaded', 'Sketch', 'Contours']} w="w-[59px]" off />
      <button aria-label="Collapse ribbon" className="mt-auto mr-[5px] mb-2 ml-auto">
        <svg width="11" height="10" viewBox="0 0 11 10" fill="none" aria-hidden="true"><path d="M1 7.500L5.500 3L10 7.500" stroke="#222" strokeWidth="2" /></svg>
      </button>
    </div>
  );
}

function ViewTools() {
  return (
    <div className="flex h-[30px] min-w-0 flex-1 items-center justify-between pr-[7px]">
      <div className="flex items-center gap-2 pl-[216px]">
        <button aria-label="Zoom to fit"><ZoomFit /></button>
        <button aria-label="Zoom to area"><ZoomArea /></button>
        <button aria-label="Previous view"><PrevView /></button>
        <button aria-label="Section view"><Section /></button>
        <button aria-label="View orientation" className="flex items-center gap-2 pr-px"><Orient /><Caret tone="gray" /></button>
        <button aria-label="Display style" className="flex items-center gap-2 pr-px"><Display /><Caret tone="gray" /></button>
        <button aria-label="Hide or show items" className="flex items-center gap-2 pr-px"><Eye /><Caret tone="gray" /></button>
        <button aria-label="Edit appearance"><EditApp /></button>
        <button aria-label="Apply scene" className="flex items-center gap-2 pr-px"><Scene /><Caret tone="gray" /></button>
        <button aria-label="View settings" className="flex items-center gap-2"><Monitor /><Caret tone="gray" /></button>
      </div>
      <div className="flex items-center gap-2">
        <button aria-label="Collapse left pane"><PaneL /></button>
        <button aria-label="Collapse right pane"><PaneR /></button>
        <button aria-label="Minimize document"><Min c={winC} /></button>
        <button aria-label="Restore document"><Restore c={winC} /></button>
        <button aria-label="Close document"><Close c={winC} /></button>
      </div>
    </div>
  );
}

function SideStrip() {
  return (
    <div className="w-[30px] shrink-0 bg-[#f5f5f5]">
      <div className="flex flex-col border-b border-[#9a9a9a] pb-[11px]">
        <div className="mt-[3px] mb-[10px] ml-px h-0 w-7 border-t-2 border-dotted border-[#b0b0b0]" />
        <div className="flex flex-col gap-2 pt-px pl-[5px]">
          {[0, 1, 2, 3, 4, 5, 6].map((n) => (
            <button key={n} aria-label={`View ${n + 1}`}><Cube n={n} /></button>
          ))}
        </div>
        <div className="mt-[6px] mb-[9px] ml-[3px] h-px bg-[#a8a8a8]" />
        <div className="flex flex-col gap-2 pl-[5px]">
          <button aria-label="Edit sketch"><EditSketch /></button>
          <button aria-label="Repair"><Wrench /></button>
          <button aria-label="Move rectangle"><RectMove /></button>
        </div>
        <div className="mt-[6px] mb-[9px] ml-[3px] h-px bg-[#a8a8a8]" />
        <div className="flex flex-col gap-2 pl-[5px]">
          <button aria-label="Make block"><Blocks /></button>
          <button aria-label="Insert block"><Blocks light /></button>
        </div>
      </div>
    </div>
  );
}

function FeaturePanel() {
  return (
    <aside className="relative flex w-[230px] shrink-0 flex-col border-x border-l-[#b5b5b5] border-r-[#868686] bg-[#f5f5f5] text-[11px]">
      <div className="mt-1 mr-0.5 flex h-4 items-center justify-center border-y border-[#b5b5b5]">
        <span className="size-[6px] rounded-full border border-[#888] bg-[#ccc]" />
      </div>
      <div className="mt-1 flex h-[26px] items-stretch border-b border-[#9a9a9a] pl-px">
        {[<PartY key="a" />, <Props key="b" />, <Config key="c" />, <Target key="d" />, <BallDark key="e" />].map((ic, i) => (
          <button
            key={i}
            aria-label={`Manager tab ${i + 1}`}
            className={`flex w-10 items-center justify-center border-t border-r border-[#868686] ${i === 0 ? '-mb-px bg-[#f8f8f8]' : 'bg-[#d0d0d0]'}`}
          >
            {ic}
          </button>
        ))}
        <button aria-label="More tabs" className="flex flex-1 items-center justify-center">
          <svg width="8" height="12" viewBox="0 0 8 12" fill="none" aria-hidden="true"><path d="M1.500 1.500L6 6L1.500 10.500" stroke="#222" strokeWidth="2" /></svg>
        </button>
      </div>
      <label className="mr-[5px] ml-1 flex h-[26px] items-center border border-[#c2c2c2] pl-0.5">
        <Funnel />
        <input aria-label="Filter tree" className="min-w-0 flex-1 bg-transparent outline-none" />
      </label>
      <div className="mt-px flex h-[22px] items-center overflow-hidden pl-1">
        <PartY />
        <span className="w-[5px] shrink-0" />
        <Maker />
        <span className="ml-[5px] whitespace-nowrap">Air Box 25_05_2025 4 (Default) &lt;&lt;</span>
      </div>
      <ul>
        {tree.map((n) => (
          <li key={n.label} className={`flex h-[22px] items-center pl-[9px] ${n.dim ? 'text-[#8c8c8c]' : ''}`}>
            <span className="w-[17px]">
              {n.open && (
                <svg width="4" height="7" viewBox="0 0 4 7" aria-hidden="true"><path d="M0 0L4 3.500L0 7Z" fill="#444" /></svg>
              )}
            </span>
            {n.icon}
            <span className="ml-[5px] whitespace-nowrap">{n.label}</span>
          </li>
        ))}
      </ul>
      <div className="mr-0.5 h-[3px] bg-[#4682b4]" />
      <div className="mt-auto mr-0.5 mb-px flex h-4 items-center bg-[#eeeeee]">
        <div className="ml-[17px] h-0.5 w-[129px] bg-[#7d7d7d]" />
      </div>
      <div className="mr-0.5 h-1 border-y border-[#b5b5b5]" />
      <div className="absolute top-[422px] -right-[9px] flex h-[39px] w-[9px] items-center justify-center border border-l-0 border-[#868686] bg-[#f5f5f5]">
        <span className="size-[6px] rounded-full border border-[#999] bg-[#ccc]" />
      </div>
    </aside>
  );
}

function Model() {
  return (
    <svg viewBox="260 136 1654 905" preserveAspectRatio="xMidYMid slice" className="absolute inset-0 size-full" aria-label="3D part">
      <g strokeLinejoin="round" stroke="#0c0d12">
        <path d="M381 500L667 469L934 440L1021 431L1290 860L1280 980L1049 1024L468 643Z" fill="#979ab0" stroke="none" />
        <path d="M381 500L667 469M934 440L1021 431" strokeWidth="1.300" fill="none" />
        <path d="M381 501L468 643" strokeWidth="2.500" />
        <path d="M468 643L1048 1023" strokeWidth="3" />
        <path d="M1025 721L1055 768L1059 750L1082 757Z" fill="#7d8090" strokeWidth="1.200" />
        <path
          d="M741 198L1174 410L1516 972L1083 758ZM816 245L819 252L1136 771L1139 773L1271 837L1356 879L1371 887L1048 361L1045 359Z"
          fill="#999cb3"
          fillRule="evenodd"
          stroke="none"
        />
        <path d="M741 198L1174 410" strokeWidth="1.300" />
        <path d="M1174 411L1516 971" stroke="#85868a" strokeWidth="2.200" />
        <path d="M814 245L819 250L1136 770L1139 773L1356 879L1371 887" fill="none" strokeWidth="1.300" />
        <path d="M816 247L1046 359" strokeWidth="4" />
        <path d="M820 249L1044 358" stroke="#55565f" strokeWidth="1.200" />
        <path d="M1043 363L1012 414L1271 837L1356 879Z" fill="#4b4d59" strokeWidth="1.300" />
        <path d="M1043 363L1048 360L1371 887L1356 879Z" fill="#858894" strokeWidth="1.300" />
        <path d="M419 211L741 198L1082 758L505 353Z" fill="#979ab0" stroke="none" />
        <path d="M419 211L741 198" strokeWidth="1.400" />
        <path d="M419 212L505 353" strokeWidth="2.600" />
        <path d="M505 353L1082 758" strokeWidth="3.200" />
        <path d="M506 354L1081 757" stroke="#3d3f4a" strokeWidth="1" />
        <path d="M741 198L1082 758" strokeWidth="2.400" />
        <path d="M1059 750L1080 761L1045 1021L1022 1005Z" fill="#41434c" strokeWidth="1.400" />
        <path d="M1059 750L1084 758L1049 1024L1044 1020L1079 762Z" fill="#5f616f" strokeWidth="1.300" />
        <path d="M1083 763L1513 973L1049 1023Z" fill="#5d5f6b" strokeWidth="1.400" />
        <path d="M1083 757L1516 968L1513 973L1083 763Z" fill="#858894" strokeWidth="1.300" />
        <path d="M1049 1023L1517 973" strokeWidth="3.400" />
        <circle cx="1513" cy="971" r="2.500" fill="#55565f" />
        <circle cx="1518" cy="971" r="2.500" fill="#999" stroke="none" />
        <circle cx="1177" cy="414" r="2.500" fill="#999" stroke="none" />
      </g>
      <g>
        <path d="M300 983L291 968" stroke="#0b5a14" strokeWidth="4" />
        <path d="M288 963L296 969L289 974Z" fill="#1c7a26" />
        <path d="M299 983L282 985" stroke="#d8181c" strokeWidth="4" />
        <path d="M273 985L284 981V989Z" fill="#b01015" />
        <path d="M300 983L296 999" stroke="#1414a8" strokeWidth="4" />
        <path d="M291 997L300 999L294 1007Z" fill="#1818c8" />
        <g fontFamily="Open Sans, sans-serif" fontSize="9">
          <text x="284" y="960" fill="#3c9446">Y</text>
          <text x="266" y="987" fill="#d84048">X</text>
          <text x="291" y="1011" fill="#5050d0">Z</text>
        </g>
      </g>
    </svg>
  );
}

function TaskPane() {
  return (
    <div className="relative mt-7 ml-auto w-[22px] border-t border-l border-[#7d7d7d]">
      {[<Globe key="0" />, <Res key="1" />, <FolderI key="2" />, <Palette key="3" />, <BallI key="4" />, <Props key="5" />, <Books key="6" />, <Forum key="7" />].map((ic, i) => (
        <button key={i} aria-label={`Task pane ${i + 1}`} className={`flex h-6 w-full items-center border-b border-[#7d7d7d] pl-[3px] ${i === 0 ? 'bg-white' : 'bg-[#d6d6d6]'}`}>
          {ic}
        </button>
      ))}
    </div>
  );
}

export default function App() {
  return (
    <div className="flex h-screen flex-col overflow-hidden bg-[#f6f6f6] font-['Open_Sans',sans-serif] text-black">
      <TitleBar />
      <Ribbon />
      <main className="flex min-h-0 flex-1 flex-col bg-white bg-[radial-gradient(ellipse_45%_26%_at_85%_34%,rgba(214,219,232,0.7),rgba(214,219,232,0)),radial-gradient(ellipse_50%_60%_at_88%_18%,rgba(222,226,236,0.8),rgba(222,226,236,0)),linear-gradient(to_bottom,rgba(255,255,255,0)_26%,#e2e6ef_47%,#e4e7f0_53%,#fdfdfe_64%,#fefefe_82%,#f3f5fa_100%)]">
        <div className="relative z-10 flex h-[22px] shrink-0 items-start">
          <div className="flex h-full shrink-0 text-[11px]" role="tablist">
            {tabs.map(([t, w]) => (
              <button
                key={t}
                role="tab"
                aria-selected={t === 'Sketch'}
                className={`${w} border-r border-[#7c7c7c] whitespace-nowrap ${t === 'Sketch' ? '-mt-px bg-[#f8f8f8] text-[12px] font-bold text-[#333]' : 'border-b bg-[#d4d4d4] text-[#222]'}`}
              >
                {t}
              </button>
            ))}
          </div>
          <ViewTools />
        </div>
        <div className="flex min-h-0 flex-1">
          <SideStrip />
          <FeaturePanel />
          <section className="relative -z-0 flex min-w-0 flex-1 items-start overflow-hidden">
            <Model />
            <TaskPane />
          </section>
        </div>
      </main>
      <div className="flex h-4 shrink-0 border-b border-[#7c7c7c] text-[11px]">
        <div className="ml-[31px] flex h-full w-[66px] border-t border-[#444] bg-[#a5a5a5]">
          {['M4 4V11M11 4L6 7.500L11 11Z', 'M10 4L5 7.500L10 11Z', 'M5 4L10 7.500L5 11Z', 'M4 4L9 7.500L4 11ZM11 4V11'].map((d) => (
            <button key={d} aria-label="Scroll tabs" className="flex-1 border border-[#8a8a8a]">
              <svg width="14" height="13" viewBox="0 0 14 15" aria-hidden="true"><path d={d} fill="#808080" stroke="#808080" /></svg>
            </button>
          ))}
        </div>
        <button className="w-14 bg-white pl-0.5 text-[12px] leading-[14px] font-bold">Model</button>
        <button className="w-[109px] border-t border-r border-l border-[#7c7c7c] bg-[#d4d4d4] pr-2 leading-[12px]">Motion Study 1</button>
        <div className="flex-1 border-t border-[#7c7c7c]" />
      </div>
      <footer className="flex h-[19px] shrink-0 items-center border-b-2 border-[#24464d] pt-0.5 text-[11px]">
        <span>SOLIDWORKS Connected Maker</span>
        <button className="mr-[27px] ml-auto flex items-center gap-7">
          IPS
          <svg width="5" height="3" viewBox="0 0 5 3" aria-hidden="true"><path d="M0 3H5L2.500 0Z" fill="#222" /></svg>
        </button>
      </footer>
    </div>
  );
}
